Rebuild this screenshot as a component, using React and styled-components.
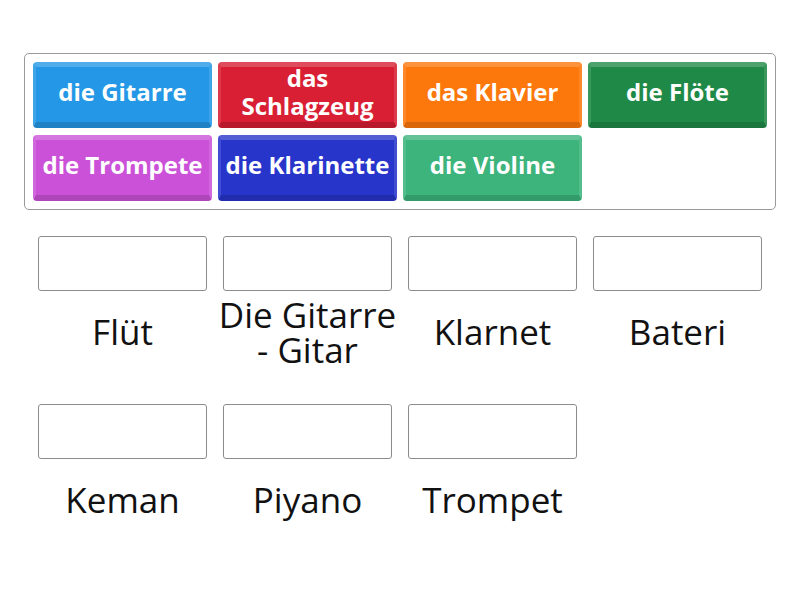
import React from "react";
import styled, { createGlobalStyle } from "styled-components";

const GlobalStyle = createGlobalStyle`
  body {
    margin: 0;
    background: #ffffff;
    font-family: "Open Sans", "Liberation Sans", sans-serif;
  }
`;

const Page = styled.div`
  width: 800px;
  height: 600px;
  padding: 53px 24px 0;
  box-sizing: border-box;
`;

const TileTray = styled.div`
  border: 1px solid #9a9a9a;
  border-radius: 5px;
  padding: 8px;
  display: grid;
  grid-template-columns: repeat(4, 179px);
  grid-auto-rows: 66px;
  column-gap: 6px;
  row-gap: 7px;
`;

const Tile = styled.div`
  background: ${(p) => p.color};
  border-radius: 4px;
  border-style: solid;
  border-width: 5px 3px 6px 3px;
  border-color: rgba(255, 255, 255, 0.2) rgba(255, 255, 255, 0.12)
    rgba(0, 0, 0, 0.14) rgba(255, 255, 255, 0.12);
  box-sizing: border-box;
  display: flex;
  align-items: center;
  justify-content: center;
  text-align: center;
  color: #ffffff;
  font-weight: 700;
  font-size: 24px;
  line-height: 28px;
  padding: 0 1px 5px;
`;

const DropGrid = styled.div`
  margin-top: 21px;
  display: grid;
  grid-template-columns: repeat(4, 179px);
  column-gap: 6px;
  row-gap: 27px;
  padding: 0 9px;
`;

const Slot = styled.div`
  display: flex;
  flex-direction: column;
  padding: 5px 5px 0;
`;

const DropBox = styled.div`
  height: 55px;
  border: 1px solid #8c8c8c;
  border-radius: 3px;
  box-sizing: border-box;
  background: #ffffff;
`;

const Label = styled.div`
  height: 81px;
  display: flex;
  align-items: center;
  justify-content: center;
  text-align: center;
  font-size: 35px;
  line-height: 35px;
  color: #111111;
  margin: 0 -5px;
`;

const tiles = [
  { text: "die Gitarre", color: "#2498e6" },
  { text: "das Schlagzeug", color: "#d81f33" },
  { text: "das Klavier", color: "#fd780c" },
  { text: "die Flöte", color: "#1f8a47" },
  { text: "die Trompete", color: "#cb52d8" },
  { text: "die Klarinette", color: "#2835cb" },
  { text: "die Violine", color: "#3cb47c" },
];

const slots = [
  "Flüt",
  "Die Gitarre - Gitar",
  "Klarnet",
  "Bateri",
  "Keman",
  "Piyano",
  "Trompet",
];

export default function App() {
  return (
    <>
      <GlobalStyle />
      <Page>
        <TileTray>
          {tiles.map((t) => (
            <Tile key={t.text} color={t.color}>
              {t.text}
            </Tile>
          ))}
        </TileTray>
        <DropGrid>
          {slots.map((s) => (
            <Slot key={s}>
              <DropBox />
              <Label>{s}</Label>
            </Slot>
          ))}
        </DropGrid>
      </Page>
    </>
  );
}
